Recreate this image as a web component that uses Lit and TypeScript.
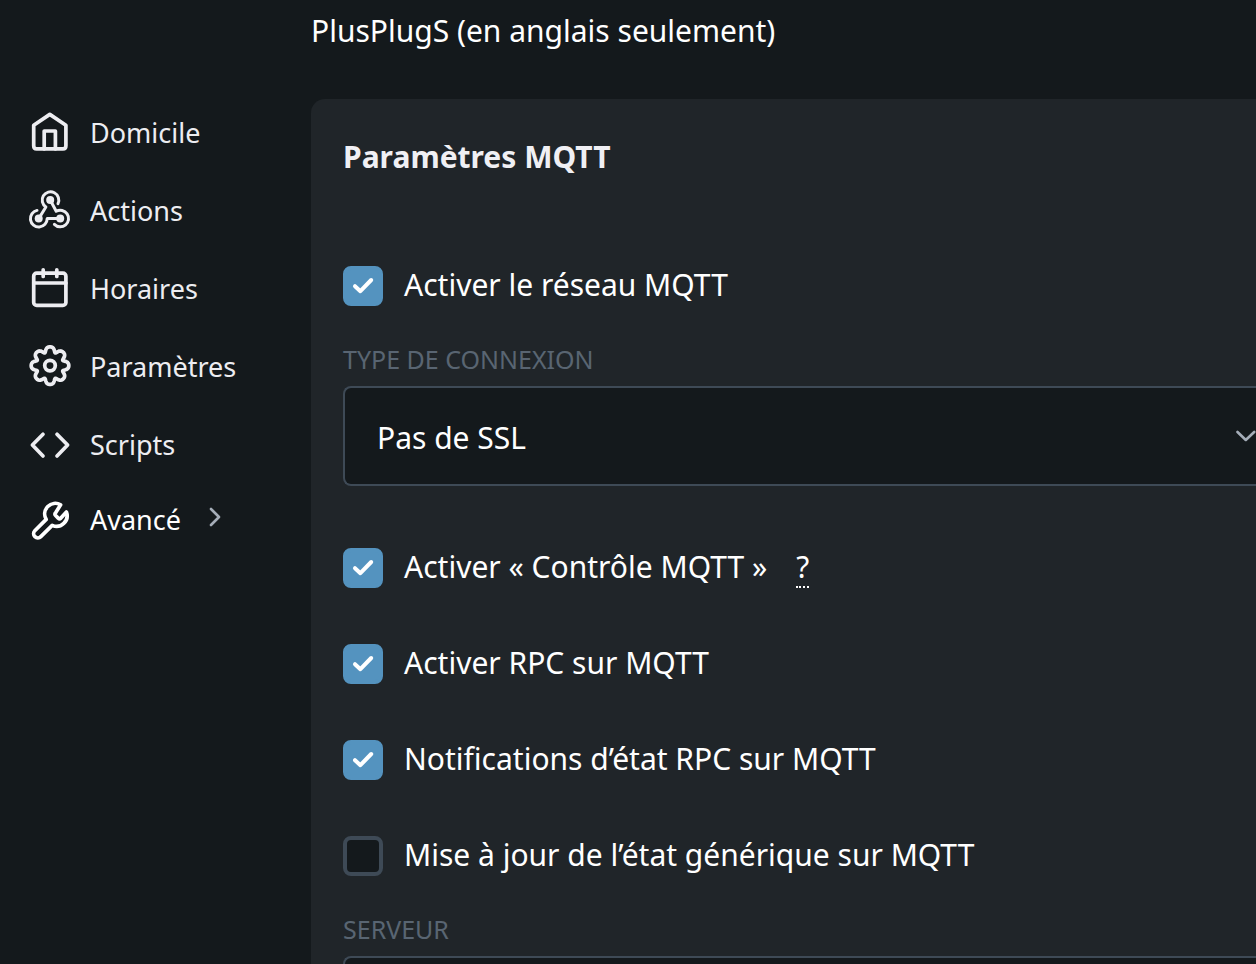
import { LitElement, html, svg, css, nothing } from "lit";
import { customElement, property, state } from "lit/decorators.js";

/* Closed cog outline with eight rounded lobes. */
const cogPath = (() => {
  const pts: string[] = [];
  for (let i = 0; i <= 240; i++) {
    const t = (i / 240) * Math.PI * 2;
    const a = t + 0.06 * Math.sin(8 * t);
    const r = 16.3 + 2.5 * (Math.tanh(0.9 * Math.cos(8 * t)) / Math.tanh(0.9));
    pts.push(`${(21 + r * Math.sin(a)).toFixed(2)} ${(19.6 - r * Math.cos(a)).toFixed(2)}`);
  }
  return "M" + pts.join("L") + "Z";
})();

const icons: Record<string, unknown> = {
  home: svg`<path d="M20.8 2.4 36.9 13.2V33.7Q36.9 36.8 34 36.8H7.6Q4.7 36.8 4.7 33.7V13.2Z"/><path d="M15.2 36.8V19H26.4V36.8"/>`,
  actions: svg`<g stroke-width="3"><circle class="dot" cx="21.2" cy="10" r="4"/><circle class="dot" cx="9.7" cy="28.6" r="4"/><circle class="dot" cx="31.2" cy="28.6" r="4"/>
    <path d="M29 13.6A8.3 8.3 0 1 0 16.9 17L9.7 28.6"/><path d="M8 20.4A8.4 8.4 0 1 0 18.2 28.6H31.2"/><path d="M21.2 10 27.2 21.3A8.3 8.3 0 1 1 25.4 34.4"/></g>`,
  calendar: svg`<rect x="4.7" y="5.2" width="32.2" height="32.2" rx="3"/><path d="M4.7 15H36.9M14.2 1.8V8.4M27.8 1.8V8.4"/>`,
  gear: svg`<circle cx="21" cy="19.6" r="5.3"/><path d=${cogPath}/>`,
  code: svg`<path d="M14 10.2 3.4 21 14 32M28 10.2 38.6 21 28 32"/>`,
  wrench: svg`<path d="M26.6 13.8a2 2 0 0 0 0 2.7l2.6 2.6a2 2 0 0 0 2.7 0L37.4 13a10.6 10.6 0 0 1-14.2 13.4L11.8 37.6a4 4 0 0 1-6-5.8L17.2 20.4A10.6 10.6 0 0 1 31.6 5.8Z"/>`,
};

@customElement("nav-item")
class NavItem extends LitElement {
  @property() icon = "";
  @property() label = "";
  @property({ type: Boolean }) expandable = false;

  static styles = css`
    :host { display: block; }
    .link { display: flex; align-items: center; gap: 19px; height: 78px; color: #ededf1; text-decoration: none; }
    .link.last { height: 72px; color: #fff; }
    .icon { width: 42px; height: 42px; flex: none; overflow: visible; fill: none; stroke: currentColor; stroke-width: 3.7; stroke-linecap: round; stroke-linejoin: round; }
    .dot { fill: currentColor; stroke: none; }
    .chevron { width: 12px; height: 20px; margin-left: 9px; margin-bottom: 6px; fill: none; stroke: #a5adb8; stroke-width: 2.6; stroke-linecap: round; stroke-linejoin: round; }
  `;

  render() {
    return html`<a class="link ${this.expandable ? "last" : ""}" href="#">
      <svg class="icon" viewBox="0 0 42 42" aria-hidden="true">${icons[this.icon]}</svg>
      <span>${this.label}</span>
      ${this.expandable
        ? html`<svg class="chevron" viewBox="0 0 12 20" aria-hidden="true"><path d="M2 2 10 10 2 18" /></svg>`
        : nothing}
    </a>`;
  }
}

@customElement("check-row")
class CheckRow extends LitElement {
  @property() label = "";
  @property() hint = "";
  @property({ type: Boolean }) checked = false;

  static styles = css`
    :host { display: block; }
    .row { display: flex; align-items: center; gap: 21px; height: 40px; white-space: nowrap; }
    .mark { display: grid; flex: none; }
    .mark > * { grid-area: 1 / 1; }
    .box { appearance: none; box-sizing: border-box; width: 40px; height: 40px; margin: 0; border: 4px solid #3e4a56; border-radius: 8px; background: #14191c; }
    .box:checked { border-color: #5493bf; background: #5493bf; }
    .tick { width: 40px; height: 40px; pointer-events: none; fill: none; stroke: #fff; stroke-width: 4; stroke-linecap: round; stroke-linejoin: round; visibility: hidden; }
    .box:checked + .tick { visibility: visible; }
    .text { padding-bottom: 2px; }
    .hint { margin-left: 8px; color: inherit; line-height: 38px; border-bottom: 2px dotted #fff; text-decoration: none; cursor: help; }
  `;

  render() {
    return html`<div class="row">
      <span class="mark">
        <input id="box" class="box" type="checkbox" .checked=${this.checked} />
        <svg class="tick" viewBox="0 0 40 40" aria-hidden="true"><path d="M12 20.2 17.4 25.2 28.2 14" /></svg>
      </span>
      <label class="text" for="box">${this.label}</label>
      ${this.hint ? html`<abbr class="hint" title=${this.hint}>?</abbr>` : nothing}
    </div>`;
  }
}

@customElement("app-root")
class AppRoot extends LitElement {
  @state() private server = "";

  static styles = css`
    :host { display: block; height: 100vh; overflow: hidden; background: #14191c; color: #fff; font-family: "Segoe UI", "Noto Sans", sans-serif; font-size: 30px; line-height: 40px; }
    .layout { display: grid; grid-template-columns: 282px minmax(0, 1fr); padding-left: 29px; }
    .sidebar { padding-top: 94px; font-size: 27px; }
    .device { margin: 0; padding: 11px 0 48px; font: inherit; line-height: 40px; }
    .card { padding: 38px 0 48px 32px; border-radius: 14px 0 0 0; background: #202529; }
    .title { margin: 0 0 89px; color: #f0f0f4; font-size: 30px; line-height: 40px; font-weight: 700; }
    .field { padding: 37px 0 62px; }
    .caption { display: block; margin-bottom: 11px; color: #596572; font-size: 25px; line-height: 32px; text-transform: uppercase; }
    .picker { display: grid; align-items: center; }
    .picker > * { grid-area: 1 / 1; }
    .control { box-sizing: border-box; width: 100%; height: 100px; margin: 0; padding: 4px 32px 0; appearance: none; border: 2px solid #3e4a56; border-right: 0; border-radius: 8px 0 0 8px; background: #14191c; color: #fff; font: inherit; outline: none; }
    .arrow { justify-self: end; width: 20px; height: 12px; pointer-events: none; fill: none; stroke: #a5adb8; stroke-width: 2.6; stroke-linecap: round; stroke-linejoin: round; }
    .checks { display: grid; gap: 56px; }
  `;

  render() {
    return html`<div class="layout">
      <nav class="sidebar">
        <nav-item icon="home" label="Domicile"></nav-item>
        <nav-item icon="actions" label="Actions"></nav-item>
        <nav-item icon="calendar" label="Horaires"></nav-item>
        <nav-item icon="gear" label="Paramètres"></nav-item>
        <nav-item icon="code" label="Scripts"></nav-item>
        <nav-item icon="wrench" label="Avancé" expandable></nav-item>
      </nav>
      <main>
        <h1 class="device">PlusPlugS (en anglais seulement)</h1>
        <section class="card">
          <h2 class="title">Paramètres MQTT</h2>
          <check-row label="Activer le réseau MQTT" checked></check-row>
          <div class="field">
            <label class="caption" for="ssl">Type de connexion</label>
            <div class="picker">
              <select id="ssl" class="control"><option>Pas de SSL</option></select>
              <svg class="arrow" viewBox="0 0 20 12" aria-hidden="true"><path d="M1.5 2 9.8 10 18.2 2" /></svg>
            </div>
          </div>
          <div class="checks">
            <check-row label="Activer « Contrôle MQTT »" hint="Contrôle MQTT" checked></check-row>
            <check-row label="Activer RPC sur MQTT" checked></check-row>
            <check-row label="Notifications d’état RPC sur MQTT" checked></check-row>
            <check-row label="Mise à jour de l’état générique sur MQTT"></check-row>
          </div>
          <div class="field">
            <label class="caption" for="server">Serveur</label>
            <input id="server" class="control" type="text" .value=${this.server} />
          </div>
        </section>
      </main>
    </div>`;
  }
}
